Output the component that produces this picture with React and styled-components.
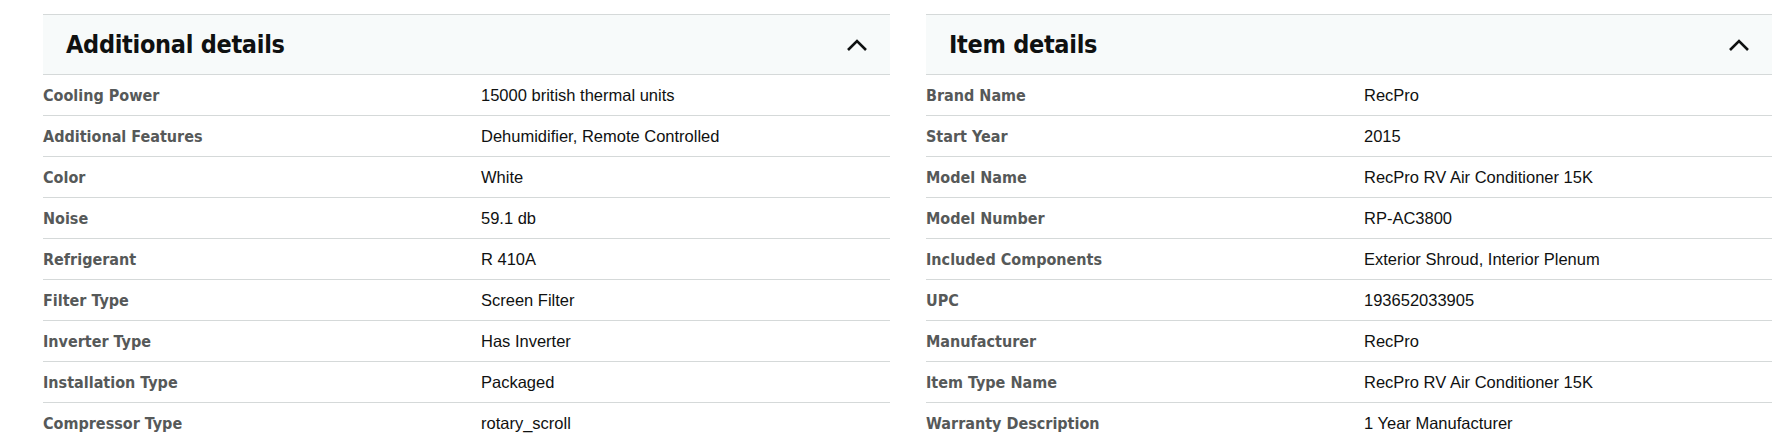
import React from 'react'
import styled, { createGlobalStyle } from 'styled-components'

const left = [
  ['Cooling Power', '15000 british thermal units'],
  ['Additional Features', 'Dehumidifier, Remote Controlled'],
  ['Color', 'White'],
  ['Noise', '59.1 db'],
  ['Refrigerant', 'R 410A'],
  ['Filter Type', 'Screen Filter'],
  ['Inverter Type', 'Has Inverter'],
  ['Installation Type', 'Packaged'],
  ['Compressor Type', 'rotary_scroll'],
]

const right = [
  ['Brand Name', 'RecPro'],
  ['Start Year', '2015'],
  ['Model Name', 'RecPro RV Air Conditioner 15K'],
  ['Model Number', 'RP-AC3800'],
  ['Included Components', 'Exterior Shroud, Interior Plenum'],
  ['UPC', '193652033905'],
  ['Manufacturer', 'RecPro'],
  ['Item Type Name', 'RecPro RV Air Conditioner 15K'],
  ['Warranty Description', '1 Year Manufacturer'],
]

const Section = ({ title, rows }) => (
  <Panel>
    <Header>
      <Title>{title}</Title>
      <svg width="22" height="14" viewBox="0 0 22 14">
        <path d="M2 12 L11 3 L20 12" fill="none" stroke="#0f1111" strokeWidth="2.6" />
      </svg>
    </Header>
    {rows.map(([k, v]) => (
      <Row key={k}>
        <Label>{k}</Label>
        <Value>{v}</Value>
      </Row>
    ))}
  </Panel>
)

export default function App() {
  return (
    <>
      <Global />
      <Page>
        <Section title="Additional details" rows={left} />
        <Section title="Item details" rows={right} />
      </Page>
    </>
  )
}

const Global = createGlobalStyle`
  body { margin: 0; background: #fff; overflow: hidden; }
`

const Page = styled.div`
  display: grid;
  grid-template-columns: 847px 846px;
  gap: 36px;
  padding: 14px 0 0 43px;
  height: 441px;
  box-sizing: border-box;
`

const Panel = styled.div`
  display: flex;
  flex-direction: column;
`

const Header = styled.div`
  height: 61px;
  display: flex;
  align-items: center;
  justify-content: space-between;
  padding: 0 22px 0 23px;
  background: #f7fafa;
  border-top: 1px solid #d5d9d9;
  border-bottom: 1px solid #d5d9d9;
  box-sizing: border-box;
`

const Title = styled.h2`
  margin: 0;
  font: bold 25px 'DejaVu Sans Condensed', 'Liberation Sans Narrow', sans-serif;
  color: #0f1111;
  letter-spacing: -0.3px;
`

const Row = styled.div`
  display: grid;
  grid-template-columns: 438px 1fr;
  align-items: center;
  height: 41px;
  border-bottom: 1px solid #d5d9d9;
  box-sizing: border-box;
`

const Label = styled.span`
  font: bold 16px 'DejaVu Sans Condensed', 'Liberation Sans Narrow', sans-serif;
  color: #565959;
`

const Value = styled.span`
  font: 16.5px 'Liberation Sans', Arial, sans-serif;
  color: #0f1111;
`
